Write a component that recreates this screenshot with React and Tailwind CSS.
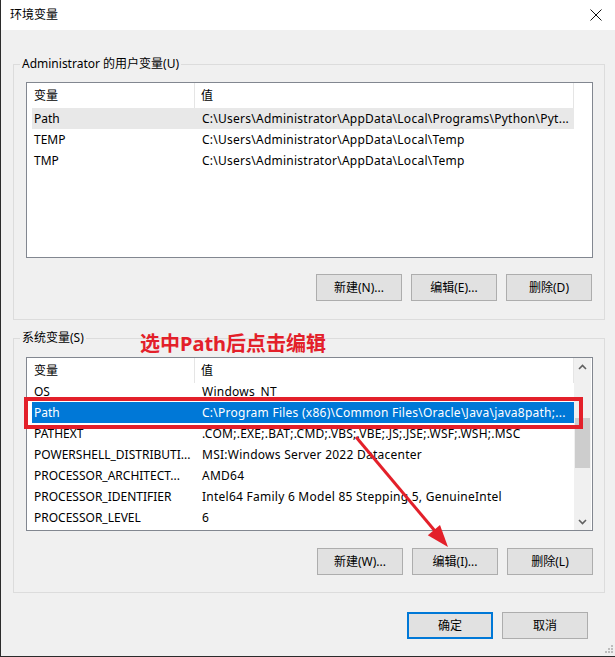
import React from "react";

const FONT = { fontFamily: '"Noto Sans", "Noto Sans CJK SC", sans-serif' };

const userVars = [
  ["Path", "C:\\Users\\Administrator\\AppData\\Local\\Programs\\Python\\Pyt...", "hover"],
  ["TEMP", "C:\\Users\\Administrator\\AppData\\Local\\Temp"],
  ["TMP", "C:\\Users\\Administrator\\AppData\\Local\\Temp"],
];

const sysVars = [
  ["OS", "Windows_NT"],
  ["Path", "C:\\Program Files (x86)\\Common Files\\Oracle\\Java\\java8path;...", "selected"],
  ["PATHEXT", ".COM;.EXE;.BAT;.CMD;.VBS;.VBE;.JS;.JSE;.WSF;.WSH;.MSC"],
  ["POWERSHELL_DISTRIBUTI...", "MSI:Windows Server 2022 Datacenter"],
  ["PROCESSOR_ARCHITECT...", "AMD64"],
  ["PROCESSOR_IDENTIFIER", "Intel64 Family 6 Model 85 Stepping 5, GenuineIntel"],
  ["PROCESSOR_LEVEL", "6"],
];

function WinButton({ children, primary }) {
  return (
    <button
      className={
        primary
          ? "w-[86px] h-[27px] bg-[#e1e1e1] border-2 border-[#0078d7] text-[12px] text-black leading-none"
          : "w-[86px] h-[27px] bg-[#e1e1e1] border border-[#adadad] text-[12px] text-black leading-none"
      }
    >
      {children}
    </button>
  );
}

function Row({ name, value, state, first }) {
  let cls = "ml-[5px] h-[21px] flex items-center text-[12px] whitespace-nowrap overflow-hidden";
  if (state === "hover") cls += " bg-[#e8e8e8] text-black";
  else if (state === "selected") cls += " bg-[#0078d7] text-white";
  else cls += " text-black";
  if (first) cls += " -mt-[2px]";
  return (
    <div className={cls}>
      <div className="w-[163px] pl-[2px] shrink-0">{name}</div>
      <div className="pl-[7px] tracking-[0.25px]">{value}</div>
    </div>
  );
}

function Header() {
  return (
    <div className="h-[25px] flex items-center text-[12px] text-black bg-white shrink-0">
      <div className="w-[168px] h-full pl-[7px] flex items-center border-r border-[#e5e5e5]">变量</div>
      <div className="flex-1 h-full pl-[6px] flex items-center border-r border-[#e5e5e5]">值</div>
    </div>
  );
}

function Chevron({ up }) {
  return (
    <svg width="9" height="6" viewBox="0 0 9 6">
      <path
        d={up ? "M1 5 L4.5 1.5 L8 5" : "M1 1 L4.5 4.5 L8 1"}
        fill="none"
        stroke="#606060"
        strokeWidth="1.6"
      />
    </svg>
  );
}

export default function App() {
  return (
    <div
      className="relative w-[615px] h-[657px] bg-[#f0f0f0] border-l border-b border-[#2b2b2b] flex flex-col overflow-hidden"
      style={FONT}
    >
      {/* title bar */}
      <div className="h-[30px] bg-white flex items-center justify-between pl-[9px] pr-[13px] shrink-0">
        <span className="text-[12px] text-black">环境变量</span>
        <svg width="12" height="12" viewBox="0 0 12 12">
          <path d="M0.5 0.5 L11.5 11.5 M11.5 0.5 L0.5 11.5" stroke="#111" strokeWidth="1" />
        </svg>
      </div>

      {/* user variables */}
      <fieldset className="mt-[26px] ml-[12px] mr-[10px] border border-[#dcdcdc] pl-[12px] pr-[11px] pt-[10px] pb-[18px]">
        <legend className="-ml-[6px] px-[2px] text-[12px] leading-[16px] text-black">
          Administrator 的用户变量(U)
        </legend>
        <div className="h-[176px] border border-[#828790] bg-white flex">
          <div className="w-[547px] flex flex-col">
            <Header />
            {userVars.map((r) => (
              <Row key={r[0]} name={r[0]} value={r[1]} state={r[2]} />
            ))}
          </div>
        </div>
        <div className="mt-[16px] flex justify-end gap-[9px] pr-[1px]">
          <WinButton>新建(N)...</WinButton>
          <WinButton>编辑(E)...</WinButton>
          <WinButton>删除(D)</WinButton>
        </div>
      </fieldset>

      {/* system variables */}
      <fieldset className="mt-[10px] ml-[12px] mr-[10px] border border-[#dcdcdc] pl-[12px] pr-[11px] pt-[11px] pb-[17px]">
        <legend className="-ml-[6px] px-[2px] text-[12px] leading-[16px] text-black">系统变量(S)</legend>
        <div className="h-[174px] border border-[#828790] bg-white flex">
          <div className="w-[547px] flex flex-col">
            <Header />
            <div className="flex-1 overflow-hidden flex flex-col">
              {sysVars.map((r, i) => (
                <Row key={r[0]} name={r[0]} value={r[1]} state={r[2]} first={i === 0} />
              ))}
            </div>
          </div>
          <div className="w-[17px] bg-[#f0f0f0] flex flex-col items-center">
            <div className="h-[17px] w-full flex items-center justify-center">
              <Chevron up />
            </div>
            <div className="mt-[43px] h-[50px] w-[15px] bg-[#cdcdcd]" />
            <div className="flex-1" />
            <div className="h-[17px] w-full flex items-center justify-center">
              <Chevron />
            </div>
          </div>
        </div>
        <div className="mt-[17px] flex justify-end gap-[9px]">
          <WinButton>新建(W)...</WinButton>
          <WinButton>编辑(I)...</WinButton>
          <WinButton>删除(L)</WinButton>
        </div>
      </fieldset>

      {/* dialog buttons */}
      <div className="mt-[19px] flex justify-end gap-[9px] pr-[27px]">
        <WinButton primary>确定</WinButton>
        <WinButton>取消</WinButton>
      </div>

      {/* resize grip */}
      <div className="flex-1 flex justify-end items-end pr-[2px] pb-[3px]">
        <svg width="8" height="8" viewBox="0 0 8 8">
          <rect x="6" y="0" width="2" height="2" fill="#bdbdbd" />
          <rect x="3" y="3" width="2" height="2" fill="#bdbdbd" />
          <rect x="6" y="3" width="2" height="2" fill="#bdbdbd" />
          <rect x="0" y="6" width="2" height="2" fill="#bdbdbd" />
          <rect x="3" y="6" width="2" height="2" fill="#bdbdbd" />
          <rect x="6" y="6" width="2" height="2" fill="#bdbdbd" />
        </svg>
      </div>

      {/* annotations */}
      <div className="absolute left-[139px] top-[333px] text-[20px] leading-[22px] font-bold text-[#e3202a]">
        选中Path后点击编辑
      </div>
      <div className="absolute left-[23px] top-[397px] w-[559px] h-[32px] border-4 border-[#e3202a]" />
      <svg className="absolute left-0 top-0 pointer-events-none" width="615" height="657">
        <line x1="355" y1="437" x2="434" y2="531" stroke="#e3202a" strokeWidth="3" />
        <polygon points="447,547 426.8,535.2 439,525" fill="#e3202a" />
      </svg>
    </div>
  );
}
